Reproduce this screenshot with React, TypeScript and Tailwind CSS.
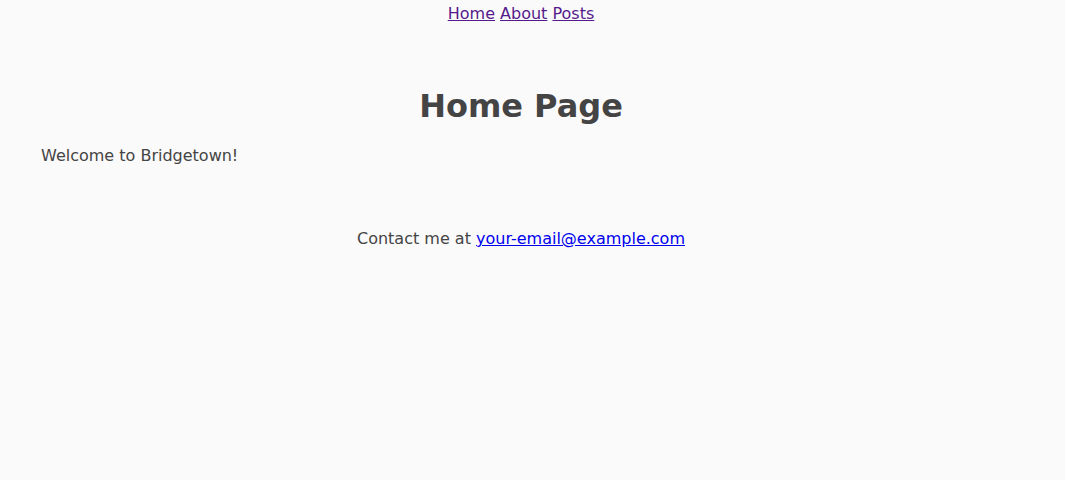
export default function App() {
  return (
    <div className="min-h-[480px] bg-[#fafafa] text-[#444] font-['DejaVu_Sans',sans-serif] text-base">
      <div className="ml-[41px] w-[960px]">
        <nav className="text-center leading-6 pt-[2px]">
          <a href="#" className="underline text-[#551a8b]">Home</a>{" "}
          <a href="#" className="underline text-[#551a8b]">About</a>{" "}
          <a href="#" className="underline text-[#551a8b]">Posts</a>
        </nav>
        <main className="pt-[60px]">
          <h1 className="text-center text-[32px] font-bold leading-10">Home Page</h1>
          <p className="mt-[18px] leading-6">Welcome to Bridgetown!</p>
        </main>
        <footer className="mt-[59px] text-center leading-6">
          Contact me at{" "}
          <a href="#" className="underline text-[#0000ee]">your-email@example.com</a>
        </footer>
      </div>
    </div>
  );
}
